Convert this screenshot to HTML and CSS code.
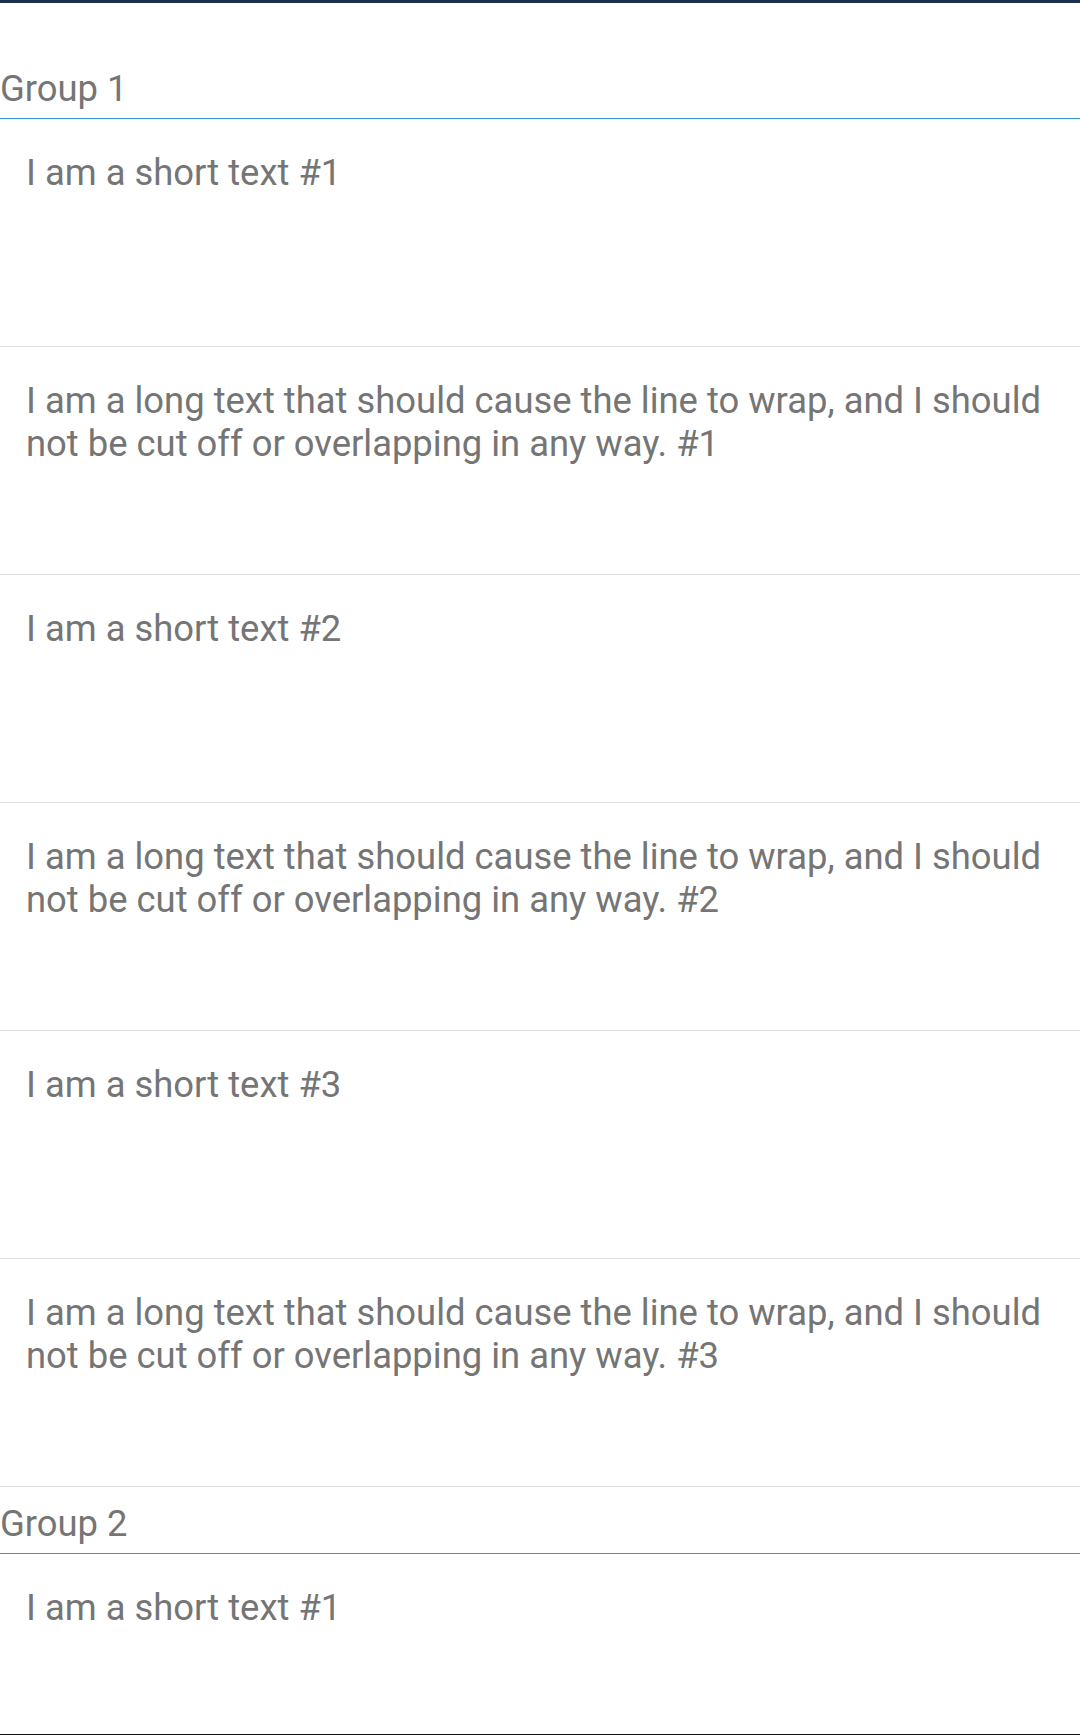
FILE: index.html
```html
<!DOCTYPE html>
<html>
<head>
<meta charset="utf-8">
<link rel="stylesheet" href="styles.css">
</head>
<body>
<div class="topbar"></div>
<div class="list">
  <section class="group">
    <div class="group-header">Group 1</div>
    <div class="row">I am a short text #1</div>
    <div class="row">I am a long text that should cause the line to wrap, and I should not be cut off or overlapping in any way. #1</div>
    <div class="row">I am a short text #2</div>
    <div class="row">I am a long text that should cause the line to wrap, and I should not be cut off or overlapping in any way. #2</div>
    <div class="row">I am a short text #3</div>
    <div class="row">I am a long text that should cause the line to wrap, and I should not be cut off or overlapping in any way. #3</div>
  </section>
  <section class="group">
    <div class="group-header">Group 2</div>
    <div class="row last">I am a short text #1</div>
  </section>
</div>
<div class="bottomline"></div>
</body>
</html>
```
FILE: styles.css
```css
html, body {
  margin: 0;
  padding: 0;
  background: #ffffff;
  height: 1735px;
  overflow: hidden;
}
body {
  font-family: Roboto, "Liberation Sans", sans-serif;
  color: #757575;
  font-size: 36.4px;
  line-height: 43.2px;
}
.topbar {
  height: 3px;
  background: #1c314b;
}
.list {
  padding-top: 49px;
}
.group-header {
  box-sizing: border-box;
  height: 67px;
  padding: 15px 0 0 0;
  border-bottom: 1px solid #3498db;
}
.row {
  box-sizing: border-box;
  height: 228px;
  padding: 32px 30px 0 26px;
  border-bottom: 1px solid #e0e0e0;
}
.row.last {
  height: 180px;
  border-bottom: none;
}
.bottomline {
  position: fixed;
  left: 0;
  right: 0;
  bottom: 0;
  height: 1px;
  background: #111111;
}
```
